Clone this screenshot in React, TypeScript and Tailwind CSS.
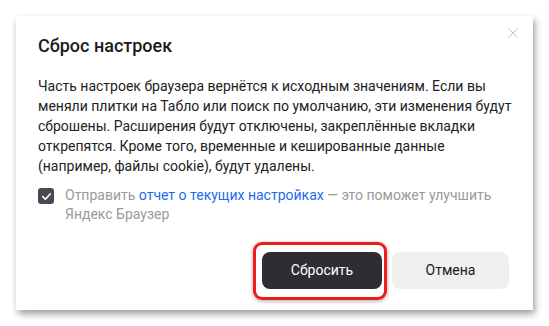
import React from "react";

const bodyLines = [
  "Часть настроек браузера вернётся к исходным значениям. Если вы",
  "меняли плитки на Табло или поиск по умолчанию, эти изменения будут",
  "сброшены. Расширения будут отключены, закреплённые вкладки",
  "открепятся. Кроме того, временные и кешированные данные",
  "(например, файлы cookie), будут удалены.",
];

const ResetDialog = () => {
  return (
    <div className="relative ml-[16px] mt-[16px] w-[517px] h-[294px] bg-white shadow-[2px_4px_7px_rgba(0,0,0,0.38)] pl-[22px] pr-[24px] pt-[18px] pb-[21px] flex flex-col">
      <button className="absolute top-[12px] right-[15px] w-[10px] h-[10px] text-[#c4c4c4]">
        <svg viewBox="0 0 10 10" className="w-[10px] h-[10px]">
          <path d="M0.5 0.5 L9.5 9.5 M9.5 0.5 L0.5 9.5" stroke="currentColor" strokeWidth="1" fill="none" />
        </svg>
      </button>

      <h2 className="text-[18px] leading-[24px] font-medium text-[#1a1a1a]">
        Сброс настроек
      </h2>

      <div className="mt-[18px] text-[14px] leading-[20px] text-[#222]">
        {bodyLines.map((line) => (
          <div key={line} className="whitespace-nowrap">
            {line}
          </div>
        ))}
      </div>

      <div className="mt-[10px] flex items-start gap-[11px]">
        <span className="mt-[2px] w-[16px] h-[16px] rounded-[3px] bg-[#4a4953] flex items-center justify-center shrink-0">
          <svg viewBox="0 0 12 12" className="w-[11px] h-[11px]">
            <path d="M2 6.2 L4.8 9 L10 3.2" stroke="#fff" strokeWidth="1.8" fill="none" strokeLinecap="round" strokeLinejoin="round" />
          </svg>
        </span>
        <p className="text-[14px] leading-[19px] text-[#9a9a9a]">
          Отправить <span className="text-[#1a6cf0]">отчет о текущих настройках</span> — это поможет улучшить
          <br />
          Яндекс Браузер
        </p>
      </div>

      <div className="mt-auto flex justify-end gap-[10px]">
        <span className="relative">
          <span className="absolute -left-[9px] -right-[5px] -top-[10px] -bottom-[11px] rounded-[9px] border-[3px] border-[#ee1c1c] shadow-[0_1px_4px_rgba(0,0,0,0.35)]" />
          <button className="relative w-[120px] h-[37px] rounded-[8px] bg-[#2e2d33] text-white text-[14px] font-normal">
            Сбросить
          </button>
        </span>
        <button className="w-[117px] h-[37px] rounded-[8px] bg-[#efefef] text-[#1a1a1a] text-[14px] font-normal">
          Отмена
        </button>
      </div>
    </div>
  );
};

export default function App() {
  return (
    <div className="w-[549px] h-[326px] bg-white overflow-hidden font-['Roboto',sans-serif]">
      <ResetDialog />
    </div>
  );
}
